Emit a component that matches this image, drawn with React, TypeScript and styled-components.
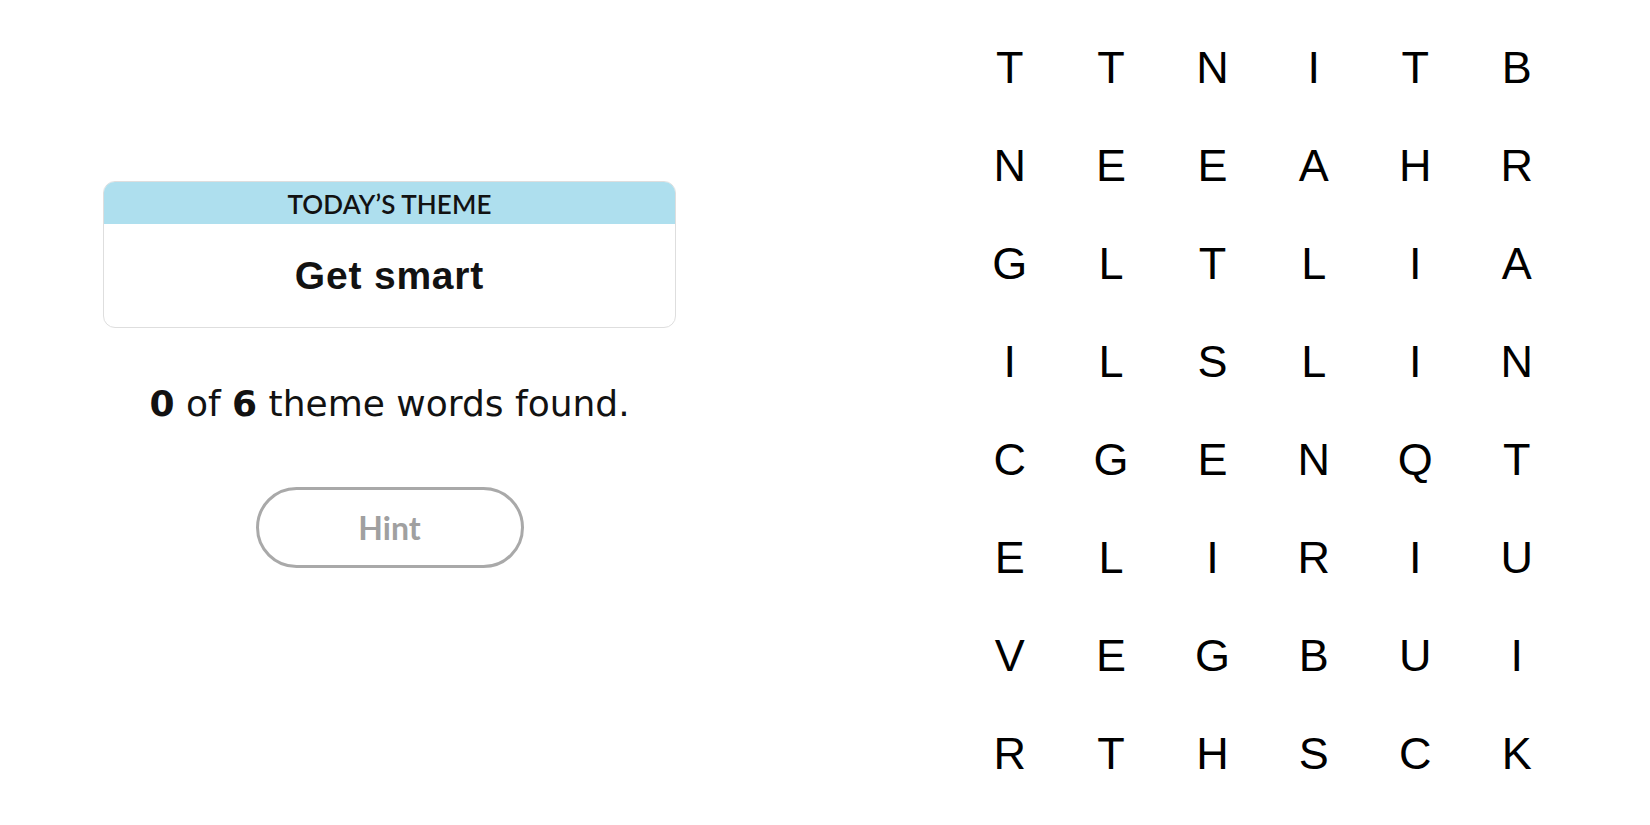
import React from "react";
import styled, { createGlobalStyle } from "styled-components";

const GlobalStyle = createGlobalStyle`
  html, body {
    margin: 0;
    padding: 0;
    background: #ffffff;
  }
  * { box-sizing: border-box; }
`;

const Page = styled.div`
  display: flex;
  width: 1650px;
  height: 825px;
  overflow: hidden;
  background: #ffffff;
`;

const LeftPanel = styled.section`
  width: 573px;
  margin-left: 103px;
  padding-top: 181px;
  display: flex;
  flex-direction: column;
  align-items: center;
`;

const ThemeCard = styled.div`
  width: 100%;
  border: 1px solid #dedede;
  border-radius: 12px;
  overflow: hidden;
  background: #ffffff;
`;

const ThemeHeader = styled.div`
  height: 42px;
  background: #aedfee;
  display: flex;
  align-items: center;
  justify-content: center;
  padding-top: 2px;
  font-family: Lato, "Liberation Sans", sans-serif;
  font-weight: 600;
  font-size: 26px;
  letter-spacing: 0.1px;
  color: #121212;
`;

const ThemeBody = styled.div`
  height: 103px;
  display: flex;
  align-items: center;
  justify-content: center;
  font-family: "Liberation Sans", Arial, sans-serif;
  font-weight: 700;
  font-size: 39px;
  letter-spacing: 0.8px;
  color: #121212;
`;

const FoundLine = styled.p`
  margin: 58px 0 0;
  font-family: "DejaVu Sans", sans-serif;
  font-size: 36px;
  line-height: 36px;
  color: #121212;
  white-space: nowrap;

  b {
    font-weight: 700;
  }
`;

const HintButton = styled.button`
  margin-top: 65px;
  width: 268px;
  height: 81px;
  border: 3px solid #a9a9a9;
  border-radius: 41px;
  background: #ffffff;
  font-family: Lato, "Liberation Sans", sans-serif;
  font-weight: 700;
  font-size: 32px;
  color: #a0a0a0;
  padding: 0;
  cursor: default;
`;

const LetterGrid = styled.div`
  margin-left: 283px;
  margin-top: 18px;
  display: grid;
  grid-template-columns: repeat(6, 101.4px);
  grid-auto-rows: 98.1px;
  align-content: start;
`;

const LetterCell = styled.div`
  display: flex;
  align-items: center;
  justify-content: center;
  font-family: "Liberation Sans", Arial, sans-serif;
  font-size: 45px;
  line-height: 1;
  color: #000000;
  user-select: none;
`;

const rows = [
  "TTNITB",
  "NEEAHR",
  "GLTLIA",
  "ILSLIN",
  "CGENQT",
  "ELIRIU",
  "VEGBUI",
  "RTHSCK",
];

export default function App() {
  return (
    <>
      <GlobalStyle />
      <Page>
        <LeftPanel>
          <ThemeCard>
            <ThemeHeader>TODAY’S THEME</ThemeHeader>
            <ThemeBody>Get smart</ThemeBody>
          </ThemeCard>
          <FoundLine>
            <b>0</b> of <b>6</b> theme words found.
          </FoundLine>
          <HintButton>Hint</HintButton>
        </LeftPanel>
        <LetterGrid>
          {rows.flatMap((row, r) =>
            row.split("").map((ch, c) => (
              <LetterCell key={`${r}-${c}`}>{ch}</LetterCell>
            ))
          )}
        </LetterGrid>
      </Page>
    </>
  );
}
